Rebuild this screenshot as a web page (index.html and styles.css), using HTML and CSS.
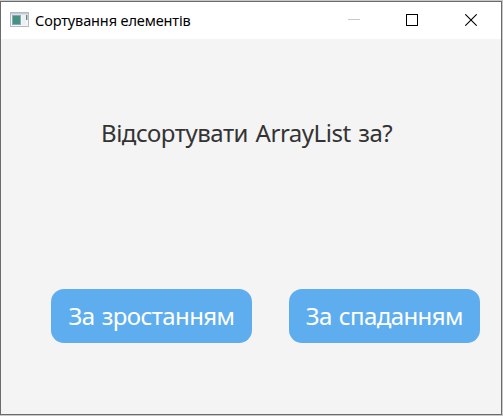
FILE: index.html
```html
<!DOCTYPE html>
<html lang="uk">
<head>
<meta charset="utf-8">
<title>Сортування елементів</title>
<link rel="stylesheet" href="styles.css">
</head>
<body>
<div class="window">
  <header class="titlebar">
    <svg class="app-icon" width="20" height="16" viewBox="0 0 20 16">
      <rect x="0.5" y="0.5" width="18" height="14" fill="#f4f6f8" stroke="#b3bac1"/>
      <rect x="1" y="1" width="17" height="1.5" fill="#c3cad2"/>
      <rect x="2" y="3" width="9" height="10" fill="#86a9bd"/>
      <rect x="3" y="4" width="7" height="8" fill="#479181"/>
      <rect x="12" y="3" width="4" height="10" fill="#eef0f2"/>
      <rect x="16" y="3" width="1.4" height="5" fill="#5f8d86"/>
    </svg>
    <h1 class="title">Сортування елементів</h1>
    <div class="controls">
      <svg class="control" width="12" height="12" viewBox="0 0 12 12"><path d="M0 5.5H12" stroke="#c9c9c9"/></svg>
      <svg class="control" width="12" height="12" viewBox="0 0 12 12"><rect x="0.5" y="0.5" width="11" height="11" fill="none" stroke="#000"/></svg>
      <svg class="control control-close" width="12" height="12" viewBox="0 0 12 12"><path d="M0.3 0.3L11.7 11.7M11.7 0.3L0.3 11.7" stroke="#000" stroke-width="1.1"/></svg>
    </div>
  </header>
  <main class="content">
    <p class="message">Відсортувати ArrayList за?</p>
    <div class="actions">
      <button class="btn btn-asc">За зростанням</button>
      <button class="btn btn-desc">За спаданням</button>
    </div>
  </main>
</div>
</body>
</html>
```
FILE: styles.css
```css
* { box-sizing: border-box; }

body {
  margin: 0;
  height: 416px;
  padding: 1px 1px 1px 0;
  background: #c8c8c8;
  font-family: "Noto Sans", "Open Sans", sans-serif;
  overflow: hidden;
}

.window {
  display: flex;
  flex-direction: column;
  height: 414px;
  border: 1px solid #6b6b6b;
  background: #f4f4f4;
}

.titlebar {
  display: flex;
  align-items: center;
  height: 37px;
  padding: 0 24px 1px 9px;
  background: #fff;
}

.app-icon { flex: none; }

.title {
  margin: 0 0 0 5px;
  font-size: 14.5px;
  font-weight: 400;
  line-height: 20px;
  letter-spacing: -0.12px;
  white-space: nowrap;
  color: #000;
}

.controls {
  display: flex;
  gap: 46px;
  margin-left: auto;
}

.control { display: block; }

.control-close { margin-left: 1px; }

.content {
  display: flex;
  flex: 1;
  flex-direction: column;
}

.message {
  margin: 77px 0 0 100px;
  font-size: 24px;
  line-height: 34px;
  letter-spacing: -0.47px;
  word-spacing: 1.8px;
  white-space: nowrap;
  color: #333;
}

.actions {
  display: flex;
  gap: 36.5px;
  margin: 139px 0 0 50px;
}

.btn {
  height: 54px;
  padding: 0 0 1px;
  border: 0;
  border-radius: 13px;
  background: #5eaeef;
  color: #fff;
  font-family: inherit;
  font-size: 24px;
  letter-spacing: -0.6px;
  word-spacing: 1.5px;
  white-space: nowrap;
}

.btn-asc { width: 201px; }

.btn-desc { width: 191.5px; }
```
